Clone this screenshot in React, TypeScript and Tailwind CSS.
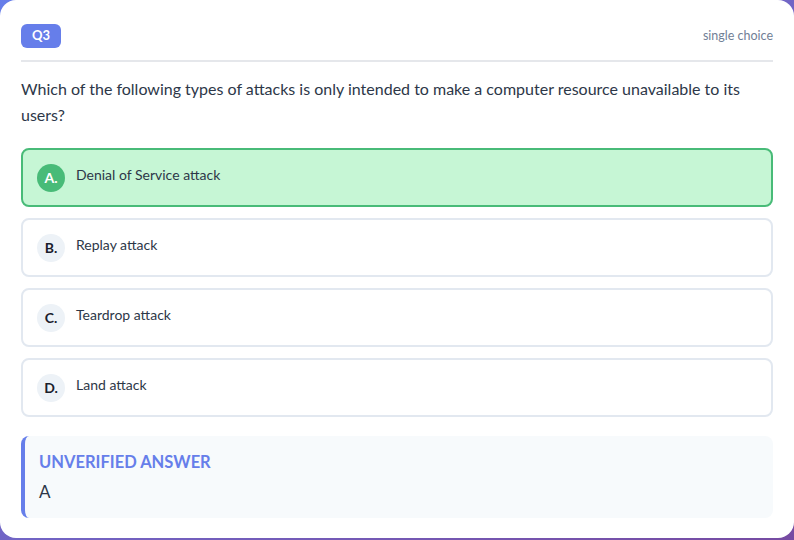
const options = [
  { letter: "A.", text: "Denial of Service attack", correct: true },
  { letter: "B.", text: "Replay attack", correct: false },
  { letter: "C.", text: "Teardrop attack", correct: false },
  { letter: "D.", text: "Land attack", correct: false },
];

const App = () => {
  return (
    <div
      className="h-[540px] w-[794px] bg-gradient-to-br from-[#667eea] to-[#764ba2]"
      style={{ fontFamily: 'Lato, "Noto Sans", sans-serif' }}
    >
      <div className="h-[538px] bg-white rounded-2xl px-[21px]">
        {/* Header */}
        <div className="flex items-center justify-between pt-6 pb-3 border-b-2 border-[#e5e7eb]">
          <span className="h-6 px-[11px] flex items-center rounded-md bg-[#667eea] text-white text-[13px] font-bold">
            Q3
          </span>
          <span className="text-[12.5px] text-[#718096]">single choice</span>
        </div>

        {/* Question */}
        <p className="mt-[14px] text-[16px] leading-[26px] text-[#2d3748]">
          Which of the following types of attacks is only intended to make a computer resource unavailable to its
          users?
        </p>

        {/* Options */}
        <div className="mt-[20px] flex flex-col gap-[11px]">
          {options.map((o) => (
            <div
              key={o.letter}
              className={`h-[59px] flex items-center gap-[11px] px-[14px] rounded-lg border-2 ${
                o.correct ? "bg-[#c6f6d5] border-[#48bb78]" : "bg-white border-[#e2e8f0]"
              }`}
            >
              <span
                className={`w-7 h-7 shrink-0 rounded-full flex items-center justify-center text-[14px] font-bold ${
                  o.correct ? "bg-[#48bb78] text-white" : "bg-[#edf2f7] text-[#1a202c]"
                }`}
              >
                {o.letter}
              </span>
              <span className="text-[14px] text-[#2d3748] mb-[6px]">{o.text}</span>
            </div>
          ))}
        </div>

        {/* Answer */}
        <div className="mt-[19px] h-[82px] rounded-lg border-l-4 border-[#667eea] bg-[#f7fafc] px-[14px] pt-[14px]">
          <div className="text-[16.5px] font-bold text-[#667eea] leading-[24px]">UNVERIFIED ANSWER</div>
          <div className="mt-[6px] text-[17px] text-[#2d3748] leading-[24px]">A</div>
        </div>
      </div>
    </div>
  );
};

export default App;
